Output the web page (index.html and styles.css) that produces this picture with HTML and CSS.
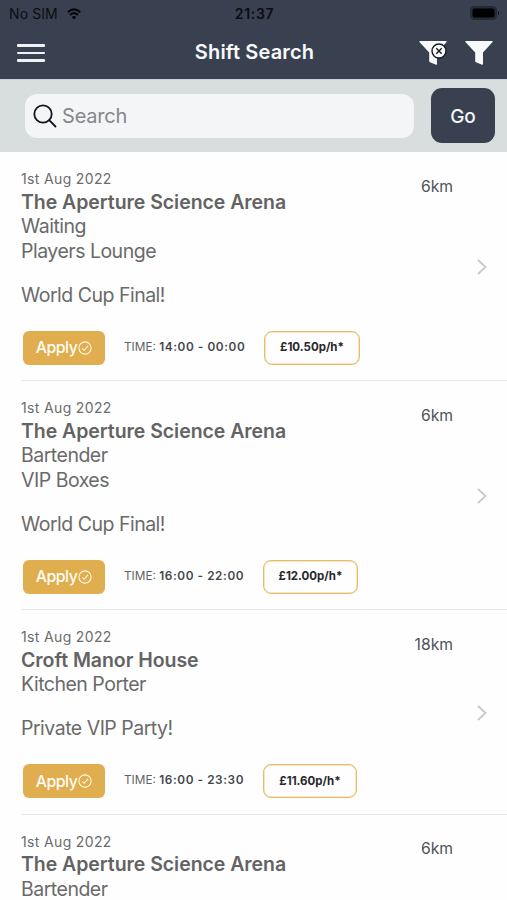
FILE: index.html
```html
<!DOCTYPE html>
<html lang="en">
<head>
<meta charset="utf-8">
<title>Shift Search</title>
<link rel="stylesheet" href="styles.css">
</head>
<body>
<svg width="0" height="0" class="defs">
  <symbol id="check" viewBox="0 0 14 14"><circle cx="7" cy="7" r="6.1"/><path d="M4.2 7.3l2 2 3.8-4.5"/></symbol>
  <symbol id="chevron" viewBox="0 0 10 16"><path d="M1 1l7.500 7-7.500 7"/></symbol>
  <symbol id="funnel" viewBox="0 0 28 24"><path d="M1 0h26q1 0 .6 1L18 11.500V23q0 1-1 .8l-6-2.500q-.8-.3-.8-1.200v-8.600L.4 1Q0 0 1 0z"/></symbol>
</svg>
<header class="top">
  <div class="status">
    <div class="carrier"><span>No SIM</span>
      <svg class="wifi" viewBox="0 0 14 12"><path d="M.8 4.200q6.200-5.600 12.400 0M3 6.900q4-3.400 8 0"/><path class="dot" d="M4.700 8.900q2.300-1.600 4.600 0L7 11.500z"/></svg>
    </div>
    <span class="clock">21:37</span>
    <svg class="battery" viewBox="0 0 31 15"><rect class="shell" x=".5" y=".5" width="26" height="13" rx="4"/><rect x="2.500" y="2.500" width="22" height="9" rx="2"/><path d="M28 5q2.500 2 0 4z"/></svg>
  </div>
  <nav class="bar">
    <div class="menu"><i></i><i></i><i></i></div>
    <h1>Shift Search</h1>
    <div class="filters">
      <div class="clear"><svg class="funnel"><use href="#funnel"/></svg>
        <svg class="cross" viewBox="0 0 16 16"><circle cx="8" cy="8" r="7"/><path d="M5.300 5.300l5.400 5.400M10.700 5.300l-5.400 5.400"/></svg>
      </div>
      <svg class="funnel"><use href="#funnel"/></svg>
    </div>
  </nav>
</header>
<section class="search">
  <div class="field">
    <svg viewBox="0 0 24 24"><circle cx="10" cy="10" r="8.700"/><path d="M16.200 16.200l6.300 6.300"/></svg>
    <span>Search</span>
  </div>
  <div class="go">Go</div>
</section>
<main>
  <article>
    <div class="date">1st Aug 2022</div>
    <h2>The Aperture Science Arena</h2>
    <p>Waiting</p>
    <p>Players Lounge</p>
    <p class="event">World Cup Final!</p>
    <div class="actions"><div class="apply"><span>Apply</span><svg><use href="#check"/></svg></div><div class="time">TIME: <b>14:00 - 00:00</b></div><div class="rate r1">£10.50p/h*</div></div>
    <span class="distance">6km</span>
    <svg class="chevron"><use href="#chevron"/></svg>
  </article>
  <article>
    <div class="date">1st Aug 2022</div>
    <h2>The Aperture Science Arena</h2>
    <p>Bartender</p>
    <p>VIP Boxes</p>
    <p class="event">World Cup Final!</p>
    <div class="actions"><div class="apply"><span>Apply</span><svg><use href="#check"/></svg></div><div class="time">TIME: <b>16:00 - 22:00</b></div><div class="rate">£12.00p/h*</div></div>
    <span class="distance">6km</span>
    <svg class="chevron"><use href="#chevron"/></svg>
  </article>
  <article>
    <div class="date">1st Aug 2022</div>
    <h2>Croft Manor House</h2>
    <p>Kitchen Porter</p>
    <p class="event">Private VIP Party!</p>
    <div class="actions"><div class="apply"><span>Apply</span><svg><use href="#check"/></svg></div><div class="time">TIME: <b>16:00 - 23:30</b></div><div class="rate r3">£11.60p/h*</div></div>
    <span class="distance">18km</span>
    <svg class="chevron"><use href="#chevron"/></svg>
  </article>
  <article>
    <div class="date">1st Aug 2022</div>
    <h2>The Aperture Science Arena</h2>
    <p>Bartender</p>
    <span class="distance">6km</span>
  </article>
</main>
</body>
</html>
```

FILE: styles.css
```css
* { box-sizing: border-box; }
body { margin: 0; height: 900px; overflow: hidden; background: #fefefe; color: #636363; font-family: Inter, "Liberation Sans", sans-serif; }
h1, h2, p { margin: 0; }
.defs { position: absolute; }
.top { height: 79px; background: #394150; }
.status { height: 27px; display: grid; grid-template-columns: 1fr auto 1fr; align-items: center; padding: 0 6px 0 9px; font-size: 14px; color: #0b0d12; }
.carrier { display: flex; align-items: center; gap: 9px; letter-spacing: .1px; }
.wifi { width: 14px; height: 12px; fill: none; stroke: #050608; stroke-width: 2.200; }
.wifi .dot { fill: #050608; stroke: none; }
.clock { font-weight: 600; font-size: 14px; letter-spacing: .65px; margin-right: 1px; }
.battery { width: 31px; height: 15px; justify-self: end; fill: #000; }
.battery .shell { fill: #252b36; stroke: #232832; }
.bar { height: 52px; display: grid; grid-template-columns: 1fr auto 1fr; align-items: center; padding: 0 14px 0 17px; }
.menu { width: 28px; display: grid; gap: 5px; }
.menu i { height: 2.500px; background: #f0f3f6; border-radius: 1px; }
h1 { font-size: 20px; line-height: 24px; font-weight: 600; letter-spacing: .15px; margin: -2px 1px 0 0; color: #f7f9fb; }
.filters { display: flex; justify-content: flex-end; gap: 18px; margin-top: -1px; }
.clear { position: relative; width: 28px; height: 24px; }
.funnel { display: block; width: 28px; height: 24px; fill: #f7f9fb; }
.cross { position: absolute; left: 12px; top: 2px; width: 16px; height: 16px; fill: #fafafa; stroke: #171b20; stroke-width: 1.400; }
.search { height: 73.400px; background: #d8dddd; border-top: 1px solid #cbd1d8; display: flex; align-items: center; gap: 17px; padding: 0 12px 1px 25px; }
.field { flex: 1; height: 44px; border-radius: 12px; background: #f3f5f7; display: flex; align-items: center; padding-left: 8px; gap: 5px; font-size: 20px; letter-spacing: -.2px; color: #85878a; }
.field svg { width: 24px; height: 24px; fill: none; stroke: #151618; stroke-width: 1.800; stroke-linecap: round; }
.go { width: 64px; height: 55px; padding-top: 1px; border-radius: 11px; background: #394150; color: #f4f6f9; font-size: 19px; font-weight: 500; display: flex; align-items: center; justify-content: center; }
article { position: relative; margin-left: 21px; padding: 17px 0 15.500px; border-bottom: 1px solid #e9e9eb; }
.date { font-size: 14px; line-height: 19px; letter-spacing: .35px; color: #6c6c6c; }
h2 { margin-top: 1.200px; font-size: 19.500px; line-height: 24.500px; font-weight: 600; letter-spacing: -.05px; }
p { font-size: 19.500px; line-height: 24.500px; letter-spacing: -.5px; color: #6a6a6a; }
.event { margin-top: 19.500px; }
.actions { display: flex; align-items: center; height: 34px; margin: 23.800px 0 0 2px; }
.apply { width: 82px; height: 34px; border-radius: 6px; background: #e0ad4f; color: #fffdf6; font-size: 15.800px; letter-spacing: -.45px; font-weight: 500; display: flex; align-items: center; justify-content: center; gap: 1px; }
.apply svg { width: 14px; height: 14px; fill: none; stroke: #fff7e6; stroke-width: 1.100; }
.time { width: 140px; padding: 0 0 2px 19px; font-size: 11.800px; white-space: nowrap; color: #5e6268; }
.time b { font-weight: 600; letter-spacing: .58px; color: #43474d; }
.rate { height: 34px; margin-left: 18px; padding-bottom: 1px; width: 95px; border: 1.500px solid #eabb67; box-shadow: inset 0 0 0 .5px #f0cc8b; border-radius: 8px; font-size: 11.500px; font-weight: 700; color: #27282b; display: flex; align-items: center; justify-content: center; }
.r1 { margin-left: 19px; width: 96px; }
.r3 { width: 94px; }
.distance { position: absolute; right: 54px; top: 24.500px; font-size: 15.700px; line-height: 20px; color: #4f5359; }
.chevron { position: absolute; right: 20px; top: 50%; margin-top: -7.500px; width: 10px; height: 16px; fill: none; stroke: #c9c9cb; stroke-width: 1.800; }
```
